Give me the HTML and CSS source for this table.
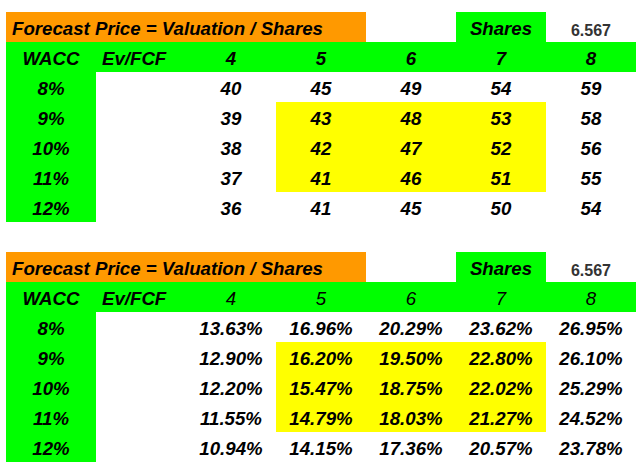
FILE: index.html
```html
<!DOCTYPE html>
<html>
<head>
<meta charset="utf-8">
<link rel="stylesheet" href="styles.css">
</head>
<body>
<div class="sheet">
  <div class="grid">
    <div class="c title">Forecast Price = Valuation / Shares</div>
    <div class="c"></div>
    <div class="c g shares">Shares</div>
    <div class="c val">6.567</div>

    <div class="c g">WACC</div>
    <div class="c g left">Ev/FCF</div>
    <div class="c g">4</div>
    <div class="c g">5</div>
    <div class="c g">6</div>
    <div class="c g">7</div>
    <div class="c g">8</div>

    <div class="c g">8%</div><div class="c"></div>
    <div class="c">40</div><div class="c">45</div><div class="c">49</div><div class="c">54</div><div class="c">59</div>

    <div class="c g">9%</div><div class="c"></div>
    <div class="c">39</div><div class="c y">43</div><div class="c y">48</div><div class="c y">53</div><div class="c">58</div>

    <div class="c g">10%</div><div class="c"></div>
    <div class="c">38</div><div class="c y">42</div><div class="c y">47</div><div class="c y">52</div><div class="c">56</div>

    <div class="c g">11%</div><div class="c"></div>
    <div class="c">37</div><div class="c y">41</div><div class="c y">46</div><div class="c y">51</div><div class="c">55</div>

    <div class="c g">12%</div><div class="c"></div>
    <div class="c">36</div><div class="c">41</div><div class="c">45</div><div class="c">50</div><div class="c">54</div>
  </div>

  <div class="grid">
    <div class="c title">Forecast Price = Valuation / Shares</div>
    <div class="c"></div>
    <div class="c g shares">Shares</div>
    <div class="c val">6.567</div>

    <div class="c g">WACC</div>
    <div class="c g left">Ev/FCF</div>
    <div class="c g thin">4</div>
    <div class="c g thin">5</div>
    <div class="c g thin">6</div>
    <div class="c g thin">7</div>
    <div class="c g thin">8</div>

    <div class="c g">8%</div><div class="c"></div>
    <div class="c">13.63%</div><div class="c">16.96%</div><div class="c">20.29%</div><div class="c">23.62%</div><div class="c">26.95%</div>

    <div class="c g">9%</div><div class="c"></div>
    <div class="c">12.90%</div><div class="c y">16.20%</div><div class="c y">19.50%</div><div class="c y">22.80%</div><div class="c">26.10%</div>

    <div class="c g">10%</div><div class="c"></div>
    <div class="c">12.20%</div><div class="c y">15.47%</div><div class="c y">18.75%</div><div class="c y">22.02%</div><div class="c">25.29%</div>

    <div class="c g">11%</div><div class="c"></div>
    <div class="c">11.55%</div><div class="c y">14.79%</div><div class="c y">18.03%</div><div class="c y">21.27%</div><div class="c">24.52%</div>

    <div class="c g">12%</div><div class="c"></div>
    <div class="c">10.94%</div><div class="c">14.15%</div><div class="c">17.36%</div><div class="c">20.57%</div><div class="c">23.78%</div>
  </div>
</div>
</body>
</html>
```

FILE: styles.css
```css
html, body {
  margin: 0;
  padding: 0;
  background: #ffffff;
}

.sheet {
  padding: 12px 6px 0 6px;
  display: flex;
  flex-direction: column;
  gap: 30px;
}

.grid {
  display: grid;
  grid-template-columns: repeat(7, 90px);
  grid-auto-rows: 30px;
}

.c {
  box-sizing: border-box;
  height: 30px;
  padding-top: 3px;
  line-height: 27px;
  font-family: "Liberation Sans", Arial, sans-serif;
  font-size: 18.67px;
  font-weight: bold;
  font-style: italic;
  color: #000;
  text-align: center;
  white-space: nowrap;
}

.title {
  grid-column: span 4;
  background: #ff9900;
  text-align: left;
  padding-left: 6px;
}

.g {
  background: #00ff00;
}

.y {
  background: #ffff00;
}

.left {
  text-align: left;
  padding-left: 6px;
}

.thin {
  font-weight: normal;
}

.val {
  font-style: normal;
  font-size: 16px;
  color: #333333;
  padding-top: 5px;
}
```
